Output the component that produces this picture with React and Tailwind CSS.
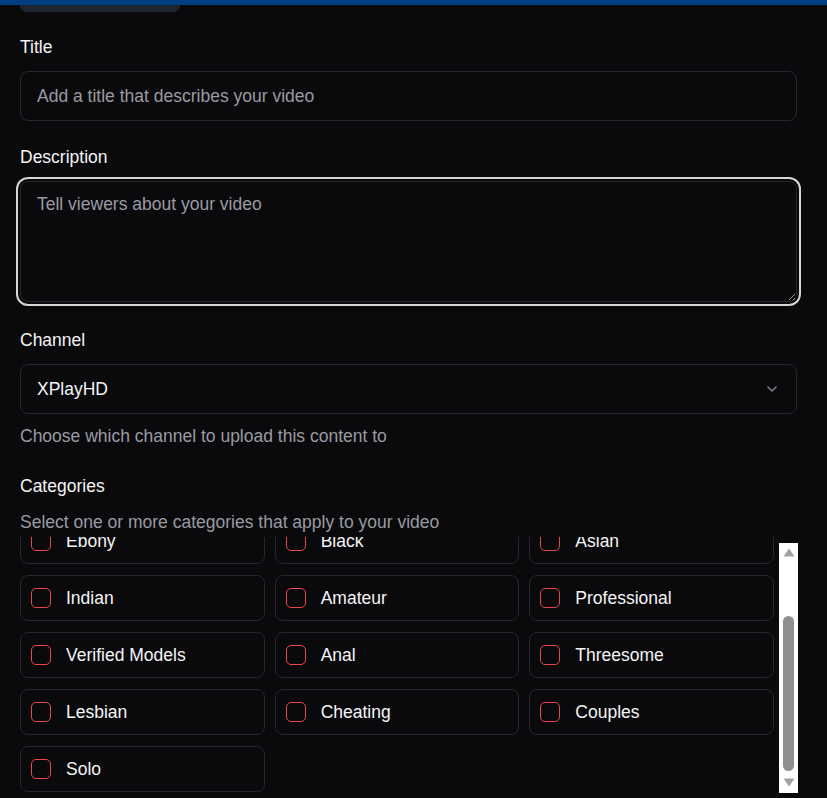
import React, { useEffect, useRef } from 'react';
import { ChevronDown } from 'lucide-react';

const categories = [
  'Latina', 'Blonde', 'Brunette',
  'Ebony', 'Black', 'Asian',
  'Indian', 'Amateur', 'Professional',
  'Verified Models', 'Anal', 'Threesome',
  'Lesbian', 'Cheating', 'Couples',
  'Solo',
];

function Label({ children, className = '' }) {
  return <div className={`text-[17.5px] leading-6 text-[#f4f4f5] font-medium ${className}`}>{children}</div>;
}

export default function App() {
  const listRef = useRef(null);

  useEffect(() => {
    if (listRef.current) listRef.current.scrollTop = listRef.current.scrollHeight;
  }, []);

  return (
    <div className="min-h-[798px] bg-[#0a0a0c] font-['Liberation_Sans',Arial,sans-serif] overflow-hidden">
      <div className="h-[5px] bg-[#003f80]" />
      <div className="ml-5 h-[7px] w-[160px] rounded-b-xl bg-[#1f2631]" />

      <div className="pl-5 pr-[30px]">
        {/* Title */}
        <Label className="mt-[23px]">Title</Label>
        <input
          type="text"
          placeholder="Add a title that describes your video"
          className="mt-3 block h-[50px] w-full rounded-lg border border-[#26262b] bg-[#0a0a0c] px-4 text-[17.5px] text-white placeholder:text-[#9a9aa2] outline-none"
        />

        {/* Description */}
        <Label className="mt-6">Description</Label>
        <textarea
          placeholder="Tell viewers about your video"
          className="mt-3 block h-[121px] w-full rounded-lg border border-[#26262b] bg-[#0a0a0c] px-4 pt-[10px] pb-3 text-[17.5px] leading-6 text-white placeholder:text-[#9a9aa2] outline-none ring-2 ring-[#d6d6d6] ring-offset-2 ring-offset-[#0a0a0c]"
        />

        {/* Channel */}
        <Label className="mt-[26px]">Channel</Label>
        <button className="mt-3 flex h-[50px] w-full items-center justify-between rounded-lg border border-[#26262b] bg-[#0a0a0c] px-4 text-left text-[17.5px] text-[#f4f4f5]">
          <span>XPlayHD</span>
          <ChevronDown className="h-4 w-4 text-[#8a8a92]" />
        </button>
        <div className="mt-[10px] text-[17.5px] leading-6 text-[#9a9aa2]">Choose which channel to upload this content to</div>

        {/* Categories */}
        <Label className="mt-[26px]">Categories</Label>
        <div className="mt-3 text-[17.5px] leading-6 text-[#9a9aa2]">Select one or more categories that apply to your video</div>

        <div className="relative mt-[3px] -mr-px">
          <div
            ref={listRef}
            className="h-[258px] overflow-y-auto pr-[24px] pb-[3px] [scrollbar-width:none]"
          >
            <div className="grid grid-cols-3 gap-x-[10px] gap-y-[11px]">
              {categories.map((c) => (
                <label
                  key={c}
                  className="flex h-[46px] items-center gap-[15px] rounded-lg border border-[#26262b] bg-[#0a0a0c] pl-[10px] cursor-pointer"
                >
                  <span className="h-5 w-5 shrink-0 rounded-[5px] border border-[#e5484d]" />
                  <span className="text-[17.5px] text-[#f4f4f5]">{c}</span>
                </label>
              ))}
            </div>
          </div>

          {/* scrollbar */}
          <div className="absolute right-0 top-[6px] bottom-[2px] w-[19px] bg-white flex flex-col items-center">
            <svg width="12" height="9" viewBox="0 0 12 9" className="mt-[5px]">
              <path d="M6 0.5 L11.5 8.5 L0.5 8.5 Z" fill="#a3a3a3" />
            </svg>
            <div className="flex-1 w-full flex flex-col items-center justify-end pb-[7px]">
              <div className="h-[155px] w-[11px] rounded-full bg-[#8f8f8f]" />
            </div>
            <svg width="12" height="9" viewBox="0 0 12 9" className="mb-[6px]">
              <path d="M0.5 0.5 L11.5 0.5 L6 8.5 Z" fill="#a3a3a3" />
            </svg>
          </div>
        </div>
      </div>
    </div>
  );
}
